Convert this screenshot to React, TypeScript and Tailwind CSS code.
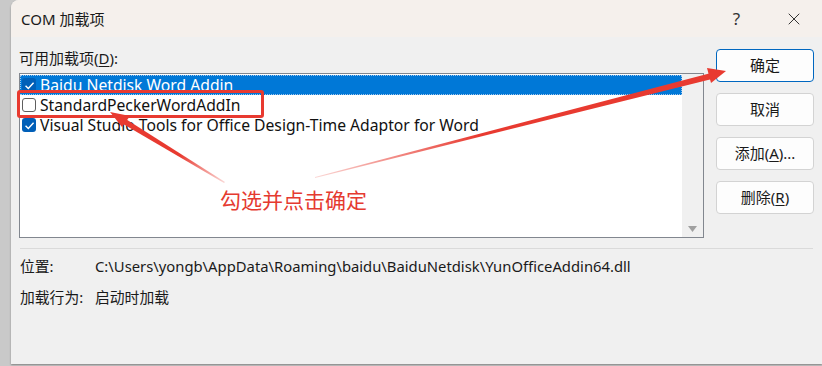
import { X } from 'lucide-react'

const font = { fontFamily: '"Noto Sans", "Noto Sans CJK SC", sans-serif' }

function CheckBox({ checked }: { checked: boolean }) {
  if (!checked) {
    return <span className="w-[14px] h-[14px] rounded-[3px] border border-[#5f5f5f] bg-white shrink-0" />
  }
  return (
    <span className="w-[14px] h-[14px] rounded-[3px] bg-[#005fb8] shrink-0 flex items-center justify-center">
      <svg width="11" height="11" viewBox="0 0 10 10">
        <path d="M1.4 5.3 L3.9 7.7 L8.7 2.5" fill="none" stroke="white" strokeWidth="1.3" />
      </svg>
    </span>
  )
}

const items = [
  { name: 'Baidu Netdisk Word Addin', checked: true, selected: true },
  { name: 'StandardPeckerWordAddIn', checked: false, selected: false },
  { name: 'Visual Studio Tools for Office Design-Time Adaptor for Word', checked: true, selected: false },
]

function DlgButton({ children, primary }: { children: React.ReactNode; primary?: boolean }) {
  return (
    <button
      className={`w-[98px] h-[33px] rounded-[4px] bg-[#fdfdfd] text-[15px] text-[#1a1a1a] ${
        primary ? 'border border-[#0067c0]' : 'border border-[#d3d3d3]'
      }`}
    >
      {children}
    </button>
  )
}

export default function App() {
  return (
    <div className="w-[822px] h-[366px] bg-[#c9c9c9] relative overflow-hidden" style={font}>
      <div className="ml-[11px] h-[364px] rounded-tl-[8px] bg-[#f0f0f0] flex flex-col overflow-hidden shadow-[0_1px_2px_rgba(0,0,0,0.35)]">
        {/* Title bar */}
        <div className="h-[37px] bg-[#f5f0ec] flex items-center pl-[10px] text-[15px] text-[#1a1a1a]">
          <span className="flex-1 pt-[1px]">COM 加载项</span>
          <span className="w-[56px] text-center text-[17px] text-[#333] pr-[3px]">?</span>
          <span className="w-[56px] flex justify-center">
            <X size={20} strokeWidth={1.1} className="text-[#222]" />
          </span>
        </div>

        {/* Body */}
        <div className="flex pl-[8px] pr-[9px] pt-[11px]">
          <div className="flex-1">
            <div className="text-[15px] text-[#1a1a1a] h-[20px] leading-[20px]">
              可用加载项(<span className="underline underline-offset-2">D</span>):
            </div>
            <div className="mt-[5px] w-[685px] h-[165px] border border-[#82878f] bg-white flex">
              <div className="flex-1 pt-[1px]">
                {items.map((it) => (
                  <div
                    key={it.name}
                    className={`h-[20px] flex items-center gap-[4px] pl-[2px] text-[15.7px] whitespace-nowrap ${
                      it.selected
                        ? 'bg-[#0078d7] text-white outline-1 outline-dotted outline-offset-[-1px] outline-[#9fc5eb]'
                        : 'text-[#111]'
                    }`}
                  >
                    <CheckBox checked={it.checked} />
                    <span className="pt-[2px]">{it.name}</span>
                  </div>
                ))}
              </div>
              <div className="w-[21px] bg-[#f0f0f0] flex flex-col items-center justify-end pb-[5px]">
                <svg width="9" height="6" viewBox="0 0 9 6">
                  <path d="M0 0 L9 0 L4.5 6 Z" fill="#a0a0a0" />
                </svg>
              </div>
            </div>
          </div>
          <div className="flex flex-col gap-[11px] pt-[1px] ml-[12px]">
            <DlgButton primary>确定</DlgButton>
            <DlgButton>取消</DlgButton>
            <DlgButton>
              添加(<span className="underline underline-offset-2">A</span>)...
            </DlgButton>
            <DlgButton>
              删除(<span className="underline underline-offset-2">R</span>)
            </DlgButton>
          </div>
        </div>

        <div className="mx-[9px] mt-[10px] h-px bg-[#dadada]" />

        <div className="pl-[9px] pt-[6px] text-[14.8px] text-[#1a1a1a]">
          <div className="flex h-[22px] items-center">
            <span className="w-[75px]">位置:</span>
            <span>C:\Users\yongb\AppData\Roaming\baidu\BaiduNetdisk\YunOfficeAddin64.dll</span>
          </div>
          <div className="flex h-[22px] items-center mt-[9px]">
            <span className="w-[75px]">加载行为:</span>
            <span>启动时加载</span>
          </div>
        </div>
      </div>

      {/* Annotation: red box */}
      <div className="absolute left-[17px] top-[90px] w-[247px] h-[28px] border-[3px] border-[#e83a30] rounded-[3px]" />

      {/* Annotation: arrows */}
      <svg className="absolute left-0 top-0" width="822" height="366" viewBox="0 0 822 366">
        <defs>
          <linearGradient id="g1" x1="225" y1="182" x2="112" y2="114" gradientUnits="userSpaceOnUse">
            <stop offset="0" stopColor="#e83a30" stopOpacity="0.2" />
            <stop offset="0.4" stopColor="#e83a30" stopOpacity="1" />
          </linearGradient>
          <linearGradient id="g2" x1="315" y1="177" x2="725" y2="72" gradientUnits="userSpaceOnUse">
            <stop offset="0" stopColor="#e83a30" stopOpacity="0.2" />
            <stop offset="0.4" stopColor="#e83a30" stopOpacity="1" />
          </linearGradient>
        </defs>
        <polygon points="225,182 224,183 118,121 121,116" fill="url(#g1)" />
        <polygon points="110,112 130,116 122,127" fill="#e83a30" />
        <polygon points="315,177 315,178 712,79 711,73" fill="url(#g2)" />
        <polygon points="726,71 707,68 711,83" fill="#e83a30" />
      </svg>

      <div className="absolute left-[220px] top-[186px] text-[21px] text-[#e53a30] leading-[28px]">
        勾选并点击确定
      </div>
    </div>
  )
}
